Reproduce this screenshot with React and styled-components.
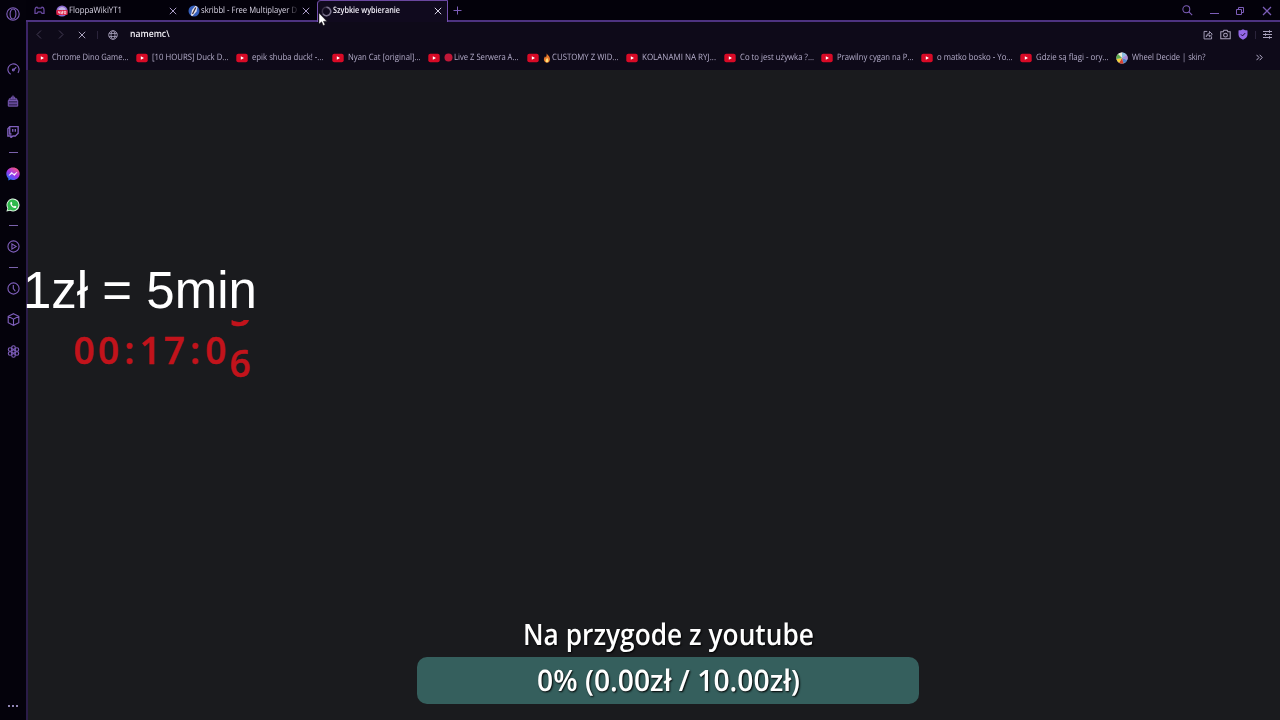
import React, { useLayoutEffect, useRef, useState } from 'react';
import styled, { createGlobalStyle } from 'styled-components';


const GlobalStyle = createGlobalStyle`
    * {
        box-sizing: border-box;
    }
    body {
        margin: 0;
        background-color: #1a1b1e;
        font-family: "Open Sans", "Noto Sans", sans-serif;
        overflow: hidden;
    }
    svg {
        display: block;
        flex: none;
    }
`

const Window = styled.div`
    display: flex;
    flex-direction: column;
    width: 1280px;
    height: 720px;
    overflow: hidden;
    position: relative;
    background-color: #03010a;
`

const Body = styled.div`
    display: flex;
    height: 720px;
`

const Sidebar = styled.aside`
    width: 26px;
    display: flex;
    flex-direction: column;
    align-items: center;
    color: #7f5fbc;
    background-color: #04020b;
`

const SideItem = styled.div`
    width: 26px;
    height: ${props => props.$height || 31}px;
    margin-bottom: ${props => props.$after || 0}px;
    display: flex;
    align-items: center;
    justify-content: center;
    flex: none;
`

const Dash = styled.div`
    width: 9px;
    height: 1px;
    margin: 5px 0;
    background-color: #7a62ac;
    flex: none;
`

const Dots = styled.div`
    display: flex;
    gap: 2px;
    margin-top: auto;
    margin-bottom: 13px;
    span {
        width: 2px;
        height: 2px;
        background-color: #9186b4;
    }
`

const Main = styled.main`
    width: 1254px;
    display: flex;
    flex-direction: column;
`

const TabBar = styled.header`
    height: 22px;
    display: flex;
    align-items: stretch;
    flex: none;
`

const TabLine = styled.div`
    display: flex;
    align-items: center;
    width: ${props => props.$width ? props.$width + 'px' : 'auto'};
    flex: ${props => props.$width ? 'none' : '1'};
    padding-top: 1px;
    border-bottom: 2px solid #4d3380;
    color: #7c5db8;
    overflow: hidden;
`

const ActiveTab = styled.div`
    display: flex;
    align-items: center;
    width: 131px;
    flex: none;
    padding: 0 5px 1px 3px;
    border: 1px solid #7450ae;
    border-top-color: #6a479f;
    border-bottom: 0;
    border-radius: 4px 0 0 0;
    background-color: #100a1e;
    color: #d9d4e6;
`

const TabTitle = styled.div`
    margin-left: ${props => props.$left || 0}px;
    flex: 1;
    display: flex;
    font-size: 8.8px;
    font-weight: ${props => props.$bold ? 600 : 500};
    color: ${props => props.$bold ? '#f1eef8' : '#dcd8e8'};
    -webkit-mask-image: ${props => props.$fade ? 'linear-gradient(to right, #000 86px, rgba(0, 0, 0, 0.25) 94px)' : 'none'};
`

const TabClose = styled.div`
    margin-right: ${props => props.$right}px;
    color: #a99cc6;
`

const WindowButtons = styled.div`
    display: flex;
    align-items: center;
    margin-left: auto;
    gap: 16.5px;
    padding-right: 8.5px;
`

const Toolbar = styled.div`
    height: 26px;
    display: flex;
    align-items: center;
    flex: none;
    padding: 0 8px 1px 7px;
    border-left: 2px solid #3b2466;
    background-color: #0e0a19;
    color: #aaa3bd;
`

const NavButton = styled.div`
    width: ${props => props.$width}px;
    display: flex;
    justify-content: center;
    color: ${props => props.$dim ? '#443c56' : '#aaa3bd'};
`

const Address = styled.div`
    margin-left: 12px;
    display: flex;
    font-size: 9.5px;
    font-weight: 600;
    color: #f4f2f8;
`

const ToolbarEnd = styled.div`
    margin-left: auto;
    display: flex;
    align-items: center;
    gap: 7px;
`

const Separator = styled.div`
    width: 1px;
    height: 8px;
    background-color: #2b243b;
`

const BookmarksBar = styled.nav`
    height: 22px;
    display: flex;
    align-items: center;
    flex: none;
    padding: 0 0 3px 8px;
    border-left: 2px solid #3b2466;
    background-color: #0e0a19;
    color: #b5aecb;
`

const Bookmark = styled.div`
    width: ${props => props.$width}px;
    display: flex;
    align-items: center;
    flex: none;
    gap: 4px;
    font-size: 8.8px;
    font-weight: 500;
`

const Emoji = styled.span`
    display: flex;
    margin-right: -3px;
`

const More = styled.div`
    margin-left: auto;
    margin-right: 17px;
    padding-bottom: 1px;
`

const Page = styled.section`
    flex: 1;
    border-left: 2px solid #2a1c48;
    background-color: #1a1b1e;
`

const Fitted = styled.span`
    display: inline-block;
    text-align: left;
    line-height: 1.3;
    white-space: pre;
    text-rendering: geometricPrecision;
    span {
        display: inline-block;
        transform-origin: left center;
    }
`

const PriceNote = styled.div`
    position: absolute;
    left: 20px;
    top: 262px;
    padding-left: 3px;
    font-family: "Liberation Sans", Arial, sans-serif;
    font-size: 51px;
    line-height: 58px;
    white-space: pre;
    color: #fff;
    clip-path: inset(0 0 0 6px);
`

const Timer = styled.div`
    position: absolute;
    left: 72px;
    top: 320px;
    height: 60px;
    display: flex;
    overflow: hidden;
    font-family: "Open Sans", "Noto Sans", sans-serif;
    font-size: 37px;
    font-weight: 600;
    line-height: 51px;
    color: #c2131b;
    -webkit-text-stroke: 0.5px #c2131b;
`

const Digit = styled.div`
    width: ${props => props.$colon ? 17 : 24.4}px;
    display: flex;
    flex-direction: column;
    align-items: center;
    margin-top: ${props => props.$shift || 0}px;
`

const Goal = styled.div`
    position: absolute;
    left: 417px;
    top: 613px;
    width: 502px;
    color: #fff;
    font-weight: 600;
    text-shadow: 1px 1px 2px #000;
`

const GoalTitle = styled.div`
    height: 44px;
    display: flex;
    justify-content: center;
    align-items: center;
    padding-bottom: 2px;
    font-size: 29.5px;
`

const GoalBar = styled.div`
    height: 47px;
    display: flex;
    justify-content: center;
    align-items: center;
    border-radius: 10px;
    background-color: #355f5d;
    font-size: 29.5px;
`

const Pointer = styled.svg`
    position: absolute;
    left: 318px;
    top: 12px;
`

// squeezes the label so that it takes exactly the given width
function FitText({ width, children }) {
    const ref = useRef(null);
    const [scale, setScale] = useState(1);

    useLayoutEffect(() => {
        setScale(width / ref.current.getBoundingClientRect().width);
    }, []);

    return (
        <Fitted style={{ width }}>
            <span ref={ref} style={{ transform: `scaleX(${scale})` }}>{children}</span>
        </Fitted>
    );
}

const Icon = ({ size = 14, sw = 1, children }) => (
    <svg width={size} height={size} viewBox="0 0 14 14" fill="none" stroke="currentColor" strokeWidth={sw}>
        {children}
    </svg>
);

const Close = ({ size = 8 }) => (
    <svg width={size} height={size} viewBox="0 0 8 8" stroke="currentColor" strokeWidth="1">
        <path d="M.8 .8l6.4 6.4M7.2 .8L.8 7.2" />
    </svg>
);

const YouTube = () => (
    <svg width="12" height="12" viewBox="0 0 12 12">
        <rect x="0.3" y="1.8" width="11.4" height="8.4" rx="2" fill="#d80a26" />
        <path d="M4.8 4.3L8 6L4.8 7.7z" fill="#fff" />
    </svg>
);

const Wheel = () => (
    <svg width="12" height="12" viewBox="0 0 12 12">
        <circle cx="6" cy="6" r="5.6" fill="#e8e4ea" />
        <path d="M6 6L2 2A5.6 5.6 0 0 1 6 .4z" fill="#e9ecdc" />
        <path d="M6 6V.4A5.6 5.6 0 0 1 10.5 2.7z" fill="#8bbfe0" />
        <path d="M6 6L10.5 2.7A5.6 5.6 0 0 1 11.2 8z" fill="#a88cd8" />
        <path d="M6 6L11.2 8A5.6 5.6 0 0 1 7.5 11.4z" fill="#4f86cc" />
        <path d="M6 6L7.5 11.4A5.6 5.6 0 0 1 3 10.7z" fill="#d8402f" />
        <path d="M6 6L3 10.7A5.6 5.6 0 0 1 .5 7z" fill="#f0cf32" />
        <path d="M6 6L.5 7A5.6 5.6 0 0 1 2 2z" fill="#5cab4c" />
    </svg>
);

const RedDot = () => (
    <Emoji>
        <svg width="9" height="9" viewBox="0 0 9 9"><circle cx="4.5" cy="4.5" r="4" fill="#c01838" /></svg>
    </Emoji>
);

const Flame = () => (
    <Emoji>
        <svg width="8" height="10" viewBox="0 0 8 10">
            <path d="M3.6 .3C4.4 2 7.2 3.5 7 6.4C6.9 8.4 5.6 9.7 4 9.7S.9 8.4 .9 6.5C.9 5 1.6 4.3 2 3.3C2.5 4 2.6 4.3 2.8 4.6C3.6 3.3 3.8 1.8 3.6 .3z" fill="#e8772a" />
            <path d="M4.1 4.8C4.8 6 5.6 6.5 5.4 7.8C5.3 8.8 4.7 9.3 4 9.3S2.6 8.7 2.6 7.7C2.6 6.5 3.8 6 4.1 4.8z" fill="#ffe27a" />
        </svg>
    </Emoji>
);

const bookmarks = [
    { width: 100, text: 'Chrome Dino Game...', size: 76.5 },
    { width: 100, text: '[10 HOURS] Duck D...', size: 76.5 },
    { width: 95.5, text: 'epik shuba duck! -...', size: 71.5 },
    { width: 96, text: 'Nyan Cat [original]...', size: 72.5 },
    { width: 99.5, text: 'Live Z Serwera A...', size: 64.5, emoji: <RedDot /> },
    { width: 99, text: 'CUSTOMY Z WID...', size: 66.5, emoji: <Flame /> },
    { width: 97.5, text: 'KOLANAMI NA RYJ...', size: 74 },
    { width: 97.5, text: 'Co to jest używka ?...', size: 74 },
    { width: 100, text: 'Prawilny cygan na P...', size: 76.5 },
    { width: 99, text: 'o matko bosko - Yo...', size: 75.5 },
    { width: 96, text: 'Gdzie są flagi - ory...', size: 72.5 },
    { width: 100, text: 'Wheel Decide | skin?', size: 73.5, icon: <Wheel /> },
];

function SideMenu() {
    return (
        <Sidebar>
            <SideItem $height={28} $after={26}>
                <Icon size={14} sw={1.1}>
                    <circle cx="7" cy="7" r="6.2" />
                    <ellipse cx="7" cy="7" rx="2.9" ry="5" />
                </Icon>
            </SideItem>
            <SideItem>
                <Icon size={13} sw={1.2}>
                    <path d="M4 12.2A6 6 0 1 1 11.8 10.6M7 7.5L10 4.6" />
                    <circle cx="6.8" cy="7.5" r="1" />
                </Icon>
            </SideItem>
            <SideItem>
                <Icon size={12} sw={1.1}>
                    <path d="M1.5 6.5h11v3h-11zM1.5 9.5v3.5h11V9.5M2.5 6.5V4.5h9v2M5 4.5V2.5h4v2" fill="#3b2a60" />
                    <path d="M7 2.5V.5" />
                </Icon>
            </SideItem>
            <SideItem>
                <Icon size={12} sw={1.6}>
                    <path d="M3.2 .8H13v7.7L9.7 11.6H7L4.6 13.5V11.6H1V3.3zM3.2 .8v8.5h2" />
                    <path d="M6.7 3.5v3.3M9.7 3.5v3.3" />
                </Icon>
            </SideItem>
            <Dash />
            <SideItem>
                <svg width="14" height="14" viewBox="0 0 14 14">
                    <defs>
                        <linearGradient id="messenger" x1="0.2" y1="1" x2="0.8" y2="0">
                            <stop offset="0" stopColor="#1b78ff" />
                            <stop offset="0.5" stopColor="#a033e8" />
                            <stop offset="1" stopColor="#ff5c78" />
                        </linearGradient>
                    </defs>
                    <path d="M7 .4C3.2 .4 .3 3.1 .3 6.7c0 1.9.8 3.5 2.1 4.7v2.2l2-1c.8.2 1.7.4 2.6.4c3.8 0 6.7-2.7 6.7-6.3S10.8.4 7 .4z" fill="url(#messenger)" />
                    <path d="M3 8.5L5.5 5.2L8 7.3L11 5.2L8.500 8.5L6 6.5z" fill="#fff" stroke="#fff" strokeWidth="0.5" />
                </svg>
            </SideItem>
            <SideItem>
                <svg width="14" height="14" viewBox="0 0 14 14">
                    <path d="M.4 13.6L1.4 10.2A6.5 6.5 0 1 1 4 12.7z" fill="#e6f7ea" />
                    <path d="M1.6 12.4L2.3 9.9A5.5 5.5 0 1 1 4.2 11.7z" fill="#2fb84c" />
                    <path d="M5.2 3.8C4.2 4.3 4 5.5 4.8 6.9C5.8 8.7 7.3 9.9 8.9 10C9.9 10 10.5 9.3 10.4 8.5L8.9 7.7L8 8.6C7 8.2 6.2 7.4 5.7 6.4L6.3 5.5L5.7 3.9z" fill="#fff" />
                </svg>
            </SideItem>
            <Dash />
            <SideItem>
                <Icon size={13} sw={1.2}>
                    <circle cx="7" cy="7" r="6" />
                    <path d="M5.3 4.2L9.8 7L5.3 9.8z" />
                </Icon>
            </SideItem>
            <Dash />
            <SideItem>
                <Icon size={13} sw={1.2}>
                    <circle cx="7" cy="7" r="6" />
                    <path d="M6.8 3.3V7L9 10" />
                </Icon>
            </SideItem>
            <SideItem>
                <Icon size={13} sw={1.2}>
                    <path d="M7 .8L12.7 3.6V10.4L7 13.2L1.3 10.4V3.6zM1.3 3.6L7 6.6L12.7 3.6M7 6.6V13.2" />
                </Icon>
            </SideItem>
            <SideItem $height={32}>
                <Icon size={13} sw={1.2}>
                    <circle cx="7" cy="7" r="1.8" />
                    <circle cx="7" cy="2.7" r="1.9" />
                    <circle cx="7" cy="11.3" r="1.9" />
                    <circle cx="3.3" cy="4.9" r="1.9" />
                    <circle cx="10.7" cy="4.9" r="1.9" />
                    <circle cx="3.3" cy="9.1" r="1.9" />
                    <circle cx="10.7" cy="9.1" r="1.9" />
                </Icon>
            </SideItem>
            <Dots><span /><span /><span /></Dots>
        </Sidebar>
    );
}

function Tabs() {
    return (
        <TabBar>
            <TabLine $width={30}>
                <NavButton $width={26}>
                    <svg width="11" height="9" viewBox="0 0 11 9" fill="none" stroke="#67489d" strokeWidth="1.3">
                        <path d="M3 1.2Q1.2 1.2 1 4V7.3H3L4.2 5.8H6.8L8 7.3H10V4Q9.8 1.2 8 1.2L7.2 2.2H3.8z" />
                    </svg>
                </NavButton>
            </TabLine>
            <TabLine $width={132}>
                <svg width="12" height="12" viewBox="0 0 12 12">
                    <circle cx="6" cy="6" r="5.6" fill="#8c6ad0" />
                    <path d="M2.5 3.5Q6 .5 9.5 3.5V6H2.5z" fill="#c3b5e6" />
                    <rect x="0.3" y="5" width="11.4" height="5" rx="1" fill="#dc1f45" />
                    <path d="M2.5 6.2v1.5h1.5M4 6v3M5.5 6.3h1.5v1.2H5.5v1.2H7M8.3 6.3h1.5v2.4H8.3z" stroke="#fff" strokeWidth="0.7" fill="none" />
                </svg>
                <TabTitle $left={1}><FitText width={53}>FloppaWikiYT1</FitText></TabTitle>
                <TabClose $right={11}><Close /></TabClose>
            </TabLine>
            <TabLine $width={129}>
                <svg width="12" height="12" viewBox="0 0 12 12">
                    <circle cx="6" cy="6" r="5.5" fill="#3560bd" />
                    <path d="M3 10.5L4 5L7.5 .8L9.5 2L8.5 6.5L4.5 11z" fill="#e8e4ec" />
                    <path d="M4.5 9L7.8 2.5" stroke="#3a3040" strokeWidth="1.3" />
                </svg>
                <TabTitle $left={1} $fade><FitText width={96}>{'skribbl - Free Multiplayer D'}</FitText></TabTitle>
                <TabClose $right={7}><Close /></TabClose>
            </TabLine>
            <ActiveTab>
                <svg width="11" height="11" viewBox="0 0 11 11" fill="none" strokeWidth="1.5">
                    <circle cx="5.5" cy="5.5" r="4.2" stroke="#3a3248" />
                    <path d="M5.5 1.3A4.2 4.2 0 1 1 2 7.8" stroke="#77708a" />
                </svg>
                <TabTitle $left={1} $bold><FitText width={67}>Szybkie wybieranie</FitText></TabTitle>
                <Close />
            </ActiveTab>
            <TabLine>
                <NavButton $width={19}>
                    <svg width="9" height="9" viewBox="0 0 9 9" stroke="#7c5db8"><path d="M4.5 .5v8M.5 4.5h8" /></svg>
                </NavButton>
                <WindowButtons>
                    <Icon size={11} sw={1.3}>
                        <circle cx="5.5" cy="5.5" r="4.4" />
                        <path d="M8.8 8.8L13 13" />
                    </Icon>
                    <svg width="9" height="9" viewBox="0 0 9 9" stroke="currentColor"><path d="M0 7.5h9" /></svg>
                    <svg width="10" height="10" viewBox="0 0 10 10" fill="none" stroke="currentColor">
                        <path d="M1.5 3.5h5v5h-5zM3.5 3.5v-2h5v5h-2" />
                    </svg>
                    <Close size={10} />
                </WindowButtons>
            </TabLine>
        </TabBar>
    );
}

function AddressBar() {
    return (
        <Toolbar>
            <NavButton $width={8} $dim>
                <svg width="6" height="9" viewBox="0 0 6 9" fill="none" stroke="currentColor"><path d="M5 .5L1 4.5L5 8.5" /></svg>
            </NavButton>
            <NavButton $width={35} $dim>
                <svg width="6" height="9" viewBox="0 0 6 9" fill="none" stroke="currentColor"><path d="M1 .5L5 4.5L1 8.5" /></svg>
            </NavButton>
            <NavButton $width={8}><Close /></NavButton>
            <NavButton $width={22}><Separator /></NavButton>
            <Icon size={10} sw={1.2}>
                <circle cx="7" cy="7" r="6" />
                <ellipse cx="7" cy="7" rx="2.8" ry="6" />
                <path d="M1.5 4.8h11M1.5 9.2h11" />
            </Icon>
            <Address><FitText width={39.5}>{'namemc\\'}</FitText></Address>
            <ToolbarEnd>
                <Icon size={10} sw={1.3}>
                    <path d="M6 2H1.5v10.500h10.500V9M4.500 9.5C4.5 6.5 6.5 5 9 5V2L13 6L9 9.5V7C7 7 5.5 7.8 4.5 9.5z" />
                </Icon>
                <Icon size={11} sw={1.3}>
                    <path d="M1 3.5h3L5 1.5h4l1 2h3v9H1z" />
                    <circle cx="7" cy="7.8" r="2.4" />
                </Icon>
                <svg width="10" height="11" viewBox="0 0 10 11">
                    <path d="M5 .3C6.5 1.2 8 1.4 9.5 1.4V5.5C9.5 8 7.5 9.8 5 10.7C2.5 9.8 .5 8 .5 5.5V1.4C2 1.4 3.5 1.2 5 .3z" fill="#9468e8" />
                    <path d="M3 5.4L4.5 6.9L7.2 4.1" fill="none" stroke="#160c28" />
                </svg>
                <Separator />
                <svg width="9" height="9" viewBox="0 0 9 9" stroke="currentColor">
                    <path d="M0 1.5h9M0 4.5h9M0 7.5h9M6.5 .2v2.6M2.5 3.2v2.6M6.5 6.2v2.6" />
                </svg>
            </ToolbarEnd>
        </Toolbar>
    );
}

function Bookmarks() {
    return (
        <BookmarksBar>
            {bookmarks.map(item => (
                <Bookmark key={item.text} $width={item.width}>
                    {item.icon || <YouTube />}
                    {item.emoji}
                    <FitText width={item.size}>{item.text}</FitText>
                </Bookmark>
            ))}
            <More>
                <svg width="7" height="7" viewBox="0 0 7 7" fill="none" stroke="currentColor">
                    <path d="M.5 .8L3 3.5L.5 6.2M3.7 .8L6.2 3.5L3.7 6.2" />
                </svg>
            </More>
        </BookmarksBar>
    );
}

function App() {
    return (
        <Window>
            <GlobalStyle />
            <Body>
                <SideMenu />
                <Main>
                    <Tabs />
                    <AddressBar />
                    <Bookmarks />
                    <Page />
                </Main>
            </Body>

            <PriceNote>1zł = 5min</PriceNote>
            <Timer>
                <Digit $shift={4}>0</Digit>
                <Digit $shift={4}>0</Digit>
                <Digit $shift={4} $colon>:</Digit>
                <Digit $shift={4}>1</Digit>
                <Digit $shift={4}>7</Digit>
                <Digit $shift={4} $colon>:</Digit>
                <Digit $shift={4}>0</Digit>
                <Digit $shift={-34}><span>5</span><span>6</span></Digit>
            </Timer>
            <Goal>
                <GoalTitle><FitText width={291}>Na przygode z youtube</FitText></GoalTitle>
                <GoalBar><FitText width={263}>0% (0.00zł / 10.00zł)</FitText></GoalBar>
            </Goal>
            <Pointer width="10" height="15" viewBox="0 0 10 15">
                <path d="M1 1V12L3.6 9.8L5.3 13.6L7 12.8L5.4 9.2H8.8z" fill="#fff" stroke="#222" strokeWidth="0.5" />
            </Pointer>
        </Window>
    );
}

export default App;
